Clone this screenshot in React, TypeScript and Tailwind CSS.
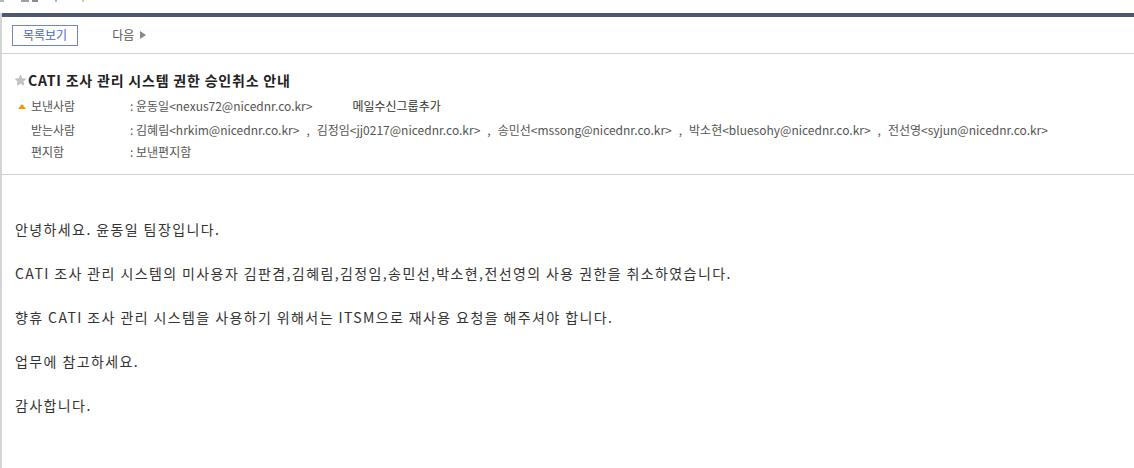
import React from 'react';

const FONT = "font-['Malgun_Gothic','Noto_Sans_CJK_KR',sans-serif]";

const recipients = [
  { name: '김혜림', mail: 'hrkim@nicednr.co.kr' },
  { name: '김정임', mail: 'jj0217@nicednr.co.kr' },
  { name: '송민선', mail: 'mssong@nicednr.co.kr' },
  { name: '박소현', mail: 'bluesohy@nicednr.co.kr' },
  { name: '전선영', mail: 'syjun@nicednr.co.kr' },
];

const body = [
  '안녕하세요. 윤동일 팀장입니다.',
  'CATI 조사 관리 시스템의 미사용자 김판겸,김혜림,김정임,송민선,박소현,전선영의 사용 권한을 취소하였습니다.',
  '향휴 CATI 조사 관리 시스템을 사용하기 위해서는 ITSM으로 재사용 요청을 해주셔야 합니다.',
  '업무에 참고하세요.',
  '감사합니다.',
];

function Star() {
  return (
    <svg width="13" height="13" viewBox="0 0 24 24" className="shrink-0">
      <path
        d="M12 2.5l2.9 6.1 6.6.8-4.9 4.5 1.3 6.6L12 17.2l-5.9 3.3 1.3-6.6-4.9-4.5 6.6-.8z"
        fill="#c4c4c4"
        stroke="#a8a8a8"
        strokeWidth="1"
      />
    </svg>
  );
}

export default function App() {
  return (
    <div className={`w-[1134px] h-[468px] overflow-hidden bg-white ${FONT}`}>
      {/* clipped top strip (bottom edge of the menu above) */}
      <div className="h-[13px] flex items-start gap-[3px] pl-0">
        <span className="w-[4px] h-[2px] bg-[#b5b5b5]" />
        <span className="ml-[14px] w-[8px] h-[2px] bg-[#a0a0a0]" />
        <span className="w-[6px] h-[2px] bg-[#8a8a8a]" />
        <span className="ml-[14px] w-[2px] h-[2px] bg-[#9bb8e0]" />
        <span className="ml-[22px] w-[2px] h-[2px] bg-[#e0c89b]" />
      </div>

      <div className="border-l-2 border-[#d4d4d4] h-full">
        <div className="h-[4px] bg-[#4e5872]" />

        {/* toolbar */}
        <div className="h-[37px] flex items-center border-b border-[#d2d2d2]">
          <button className="ml-[10px] h-[21px] px-[10px] border border-[#6b86d0] text-[12px] text-[#4a68c0] leading-none bg-white">
            목록보기
          </button>
          <div className="ml-[34px] flex items-center gap-[6px] text-[12px] text-[#555]">
            <span>다음</span>
            <span className="w-0 h-0 border-y-[4px] border-y-transparent border-l-[6px] border-l-[#888]" />
          </div>
        </div>

        {/* header */}
        <div className="pt-[16px] pb-[11px] border-b border-[#d2d2d2]">
          <div className="flex items-center gap-[1px] pl-[12px] h-[20px]">
            <Star />
            <span className="text-[14px] font-bold text-[#222] tracking-[0.8px]">
              CATI 조사 관리 시스템 권한 승인취소 안내
            </span>
          </div>
          <div className="mt-[4px] text-[12px] text-[#555]">
            <div className="flex items-center h-[24px]">
              <span className="w-[29px] flex justify-end pr-[5px]">
                <span className="w-0 h-0 border-x-[4px] border-x-transparent border-b-[5px] border-b-[#f39800]" />
              </span>
              <span className="w-[99px]">보낸사람</span>
              <span>: 윤동일&lt;nexus72@nicednr.co.kr&gt;</span>
              <span className="ml-[40px] text-[#333]">메일수신그룹추가</span>
            </div>
            <div className="flex items-center h-[23px]">
              <span className="w-[29px]" />
              <span className="w-[99px]">받는사람</span>
              <span>
                :{' '}
                {recipients.map((r, i) => (
                  <span key={r.mail}>
                    {i > 0 && <span className="px-[7px]">,</span>}
                    {r.name}&lt;{r.mail}&gt;
                  </span>
                ))}
              </span>
            </div>
            <div className="flex items-center h-[22px]">
              <span className="w-[29px]" />
              <span className="w-[99px]">편지함</span>
              <span>: 보낸편지함</span>
            </div>
          </div>
        </div>

        {/* body */}
        <div className="pl-[13px] pt-[42px] text-[14px] text-[#333] tracking-[1.4px] flex flex-col gap-[20px]">
          {body.map((line) => (
            <p key={line} className="leading-[24px]">{line}</p>
          ))}
        </div>
      </div>
    </div>
  );
}
